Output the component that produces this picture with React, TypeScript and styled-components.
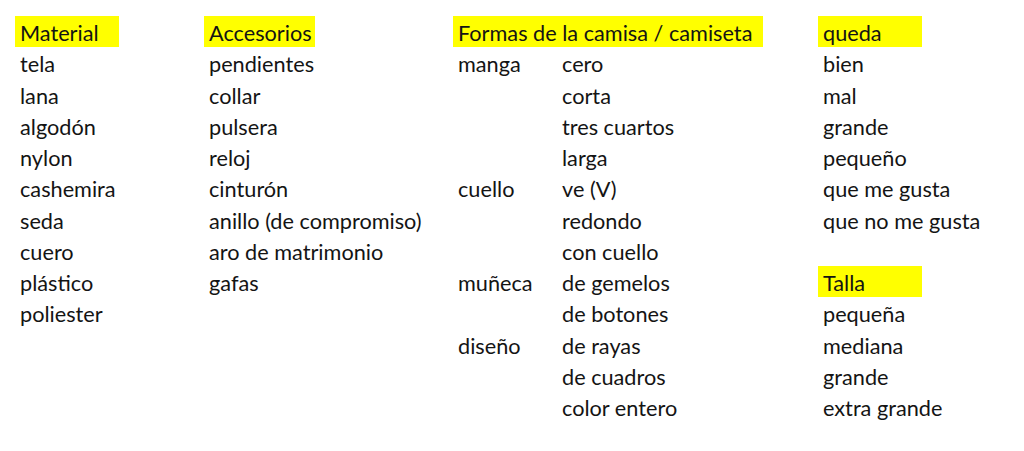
import React from "react";
import styled, { createGlobalStyle } from "styled-components";

const GlobalStyle = createGlobalStyle`
  html, body {
    margin: 0;
    padding: 0;
    background: #ffffff;
  }
  body {
    font-family: Lato, "Open Sans", "Liberation Sans", sans-serif;
    color: #141414;
  }
`;

const Sheet = styled.div`
  width: 1024px;
  height: 451px;
  box-sizing: border-box;
  padding: 16px 0 0 15px;
  display: grid;
  grid-template-columns: 189px 249px 104px 261px 1fr;
  grid-auto-rows: 31.25px;
`;

const Cell = styled.div<{ $span?: number }>`
  grid-column: span ${(p) => p.$span ?? 1};
  display: flex;
  align-items: center;
  font-size: 21.7px;
  white-space: nowrap;
`;

const Label = styled.span<{ $fill?: number }>`
  display: flex;
  align-items: center;
  box-sizing: border-box;
  height: 100%;
  padding-left: 5px;
  padding-top: 3px;
  width: ${(p) => (p.$fill ? `${p.$fill}px` : "auto")};
  background: ${(p) => (p.$fill ? "#ffff00" : "transparent")};
`;

type Entry = { text: string; fill?: number; span?: number } | null;

const rows: Entry[][] = [
  [
    { text: "Material", fill: 104 },
    { text: "Accesorios", fill: 111 },
    { text: "Formas de la camisa / camiseta", fill: 310, span: 2 },
    { text: "queda", fill: 104 },
  ],
  [{ text: "tela" }, { text: "pendientes" }, { text: "manga" }, { text: "cero" }, { text: "bien" }],
  [{ text: "lana" }, { text: "collar" }, null, { text: "corta" }, { text: "mal" }],
  [{ text: "algodón" }, { text: "pulsera" }, null, { text: "tres cuartos" }, { text: "grande" }],
  [{ text: "nylon" }, { text: "reloj" }, null, { text: "larga" }, { text: "pequeño" }],
  [{ text: "cashemira" }, { text: "cinturón" }, { text: "cuello" }, { text: "ve (V)" }, { text: "que me gusta" }],
  [{ text: "seda" }, { text: "anillo (de compromiso)" }, null, { text: "redondo" }, { text: "que no me gusta" }],
  [{ text: "cuero" }, { text: "aro de matrimonio" }, null, { text: "con cuello" }, null],
  [{ text: "plástico" }, { text: "gafas" }, { text: "muñeca" }, { text: "de gemelos" }, { text: "Talla", fill: 104 }],
  [{ text: "poliester" }, null, null, { text: "de botones" }, { text: "pequeña" }],
  [null, null, { text: "diseño" }, { text: "de rayas" }, { text: "mediana" }],
  [null, null, null, { text: "de cuadros" }, { text: "grande" }],
  [null, null, null, { text: "color entero" }, { text: "extra grande" }],
];

export default function App() {
  return (
    <>
      <GlobalStyle />
      <Sheet>
        {rows.map((row, r) =>
          row.map((entry, c) => (
            <Cell key={`${r}-${c}`} $span={entry?.span}>
              {entry ? <Label $fill={entry.fill}>{entry.text}</Label> : null}
            </Cell>
          ))
        )}
      </Sheet>
    </>
  );
}
